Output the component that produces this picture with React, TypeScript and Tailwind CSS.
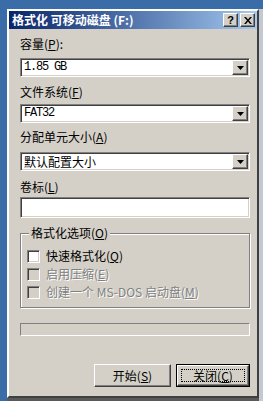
import React from 'react';

const sunken =
  'border border-t-[#808080] border-l-[#808080] border-b-white border-r-white shadow-[inset_1px_1px_0_#404040,inset_-1px_-1px_0_#d4d0c8]';
const raised =
  'border border-t-white border-l-white border-b-[#404040] border-r-[#404040] shadow-[inset_-1px_-1px_0_#808080,inset_1px_1px_0_#d4d0c8]';

function Key({ k }: { k: string }) {
  return (
    <span>
      (<span className="underline underline-offset-1">{k}</span>)
    </span>
  );
}

function Combo({ value, mono }: { value: string; mono?: boolean }) {
  return (
    <div className={`h-[19px] bg-white flex items-center ${sunken}`}>
      <span
        className={`flex-1 pl-[3px] leading-[15px] ${
          mono ? "font-['Liberation_Mono',monospace] text-[12px] tracking-[-1.2px]" : 'text-[12px]'
        }`}
      >
        {value}
      </span>
      <div className={`w-[16px] h-[15px] mr-[1px] bg-[#d4d0c8] flex items-center justify-center ${raised}`}>
        <svg width="7" height="4" viewBox="0 0 7 4">
          <path d="M0 0h7L3.5 4z" fill="#000" />
        </svg>
      </div>
    </div>
  );
}

function Check({ label, enabled }: { label: React.ReactNode; enabled?: boolean }) {
  return (
    <div className="flex items-center h-[18px]">
      <div className={`w-[13px] h-[13px] ${enabled ? 'bg-white' : 'bg-[#d4d0c8]'} ${sunken}`} />
      <span
        className={`ml-[6px] text-[12px] leading-[14px] ${
          enabled ? 'text-black' : 'text-[#808080] [text-shadow:1px_1px_0_#fff]'
        }`}
      >
        {label}
      </span>
    </div>
  );
}

export default function App() {
  return (
    <div className="w-[263px] h-[401px] bg-[#3a6ca8] flex flex-col overflow-hidden font-['Noto_Sans_CJK_SC','Liberation_Sans',sans-serif] text-black">
      <div className="h-[9px] shrink-0" />
      <div className="flex flex-1">
        <div className="w-[7px] shrink-0" />
        <div className="flex flex-col">
          <div className="w-[252px] h-[389px] bg-[#d4d0c8] border-2 border-t-white border-l-white border-b-[#404040] border-r-[#404040] flex flex-col">
            {/* title bar */}
            <div className="h-[18px] mx-0 flex items-center bg-gradient-to-r from-[#0a246a] to-[#a6caf0]">
              <span className="flex-1 pl-[3px] text-white font-bold text-[12px] leading-[14px] whitespace-nowrap">
                格式化 可移动磁盘 (F:)
              </span>
              <div className="flex gap-[2px] mr-[2px]">
                <div className={`w-[15px] h-[14px] bg-[#d4d0c8] flex items-center justify-center ${raised}`}>
                  <span className="font-['Liberation_Sans',sans-serif] font-bold text-[11px] leading-none">?</span>
                </div>
                <div className={`w-[15px] h-[14px] bg-[#d4d0c8] flex items-center justify-center ${raised}`}>
                  <svg width="8" height="7" viewBox="0 0 8 7">
                    <path d="M0 0h2l2 2.5L6 0h2L5 3.5 8 7H6L4 4.5 2 7H0l3-3.5z" fill="#000" />
                  </svg>
                </div>
              </div>
            </div>

            {/* body */}
            <div className="flex flex-col pl-[11px] pr-[7px] text-[12px] leading-[14px]">
              <div className="mt-[8px]">
                容量<Key k="P" />:
              </div>
              <div className="mt-[7px]">
                <Combo value="1.85 GB" mono />
              </div>
              <div className="mt-[8px]">
                文件系统<Key k="F" />
              </div>
              <div className="mt-[5px]">
                <Combo value="FAT32" mono />
              </div>
              <div className="mt-[7px]">
                分配单元大小<Key k="A" />
              </div>
              <div className="mt-[8px]">
                <Combo value="默认配置大小" />
              </div>
              <div className="mt-[9px]">
                卷标<Key k="L" />
              </div>
              <div className={`mt-[3px] h-[21px] bg-white ${sunken}`} />

              {/* group box */}
              <div className="relative mt-[15px] h-[75px] border border-[#808080] shadow-[inset_1px_1px_0_#fff,1px_1px_0_#fff]">
                <span className="absolute left-[8px] -top-[8px] px-[2px] bg-[#d4d0c8] leading-[14px]">
                  格式化选项<Key k="O" />
                </span>
                <div className="flex flex-col pl-[6px] pt-[13px]">
                  <Check enabled label={<>快速格式化<Key k="Q" /></>} />
                  <Check label={<>启用压缩<Key k="E" /></>} />
                  <Check label={<>创建一个 MS-DOS 启动盘<Key k="M" /></>} />
                </div>
              </div>

              {/* progress */}
              <div className="mt-[15px] h-[13px] border border-t-[#808080] border-l-[#808080] border-b-white border-r-white" />

              {/* buttons */}
              <div className="mt-[28px] flex justify-end gap-[5px]">
                <div className={`w-[77px] h-[23px] bg-[#d4d0c8] flex items-center justify-center ${raised}`}>
                  开始<Key k="S" />
                </div>
                <div className="w-[74px] h-[23px] border border-black">
                  <div className={`w-full h-full bg-[#d4d0c8] flex items-center justify-center p-[3px] ${raised}`}>
                    <div className="w-full h-full border border-dotted border-black flex items-center justify-center">
                      关闭<Key k="C" />
                    </div>
                  </div>
                </div>
              </div>
            </div>
          </div>
          <div className="flex-1 bg-[#5a5a5a]" />
        </div>
        <div className="flex-1 bg-[#c4c8d0]" />
      </div>
    </div>
  );
}
